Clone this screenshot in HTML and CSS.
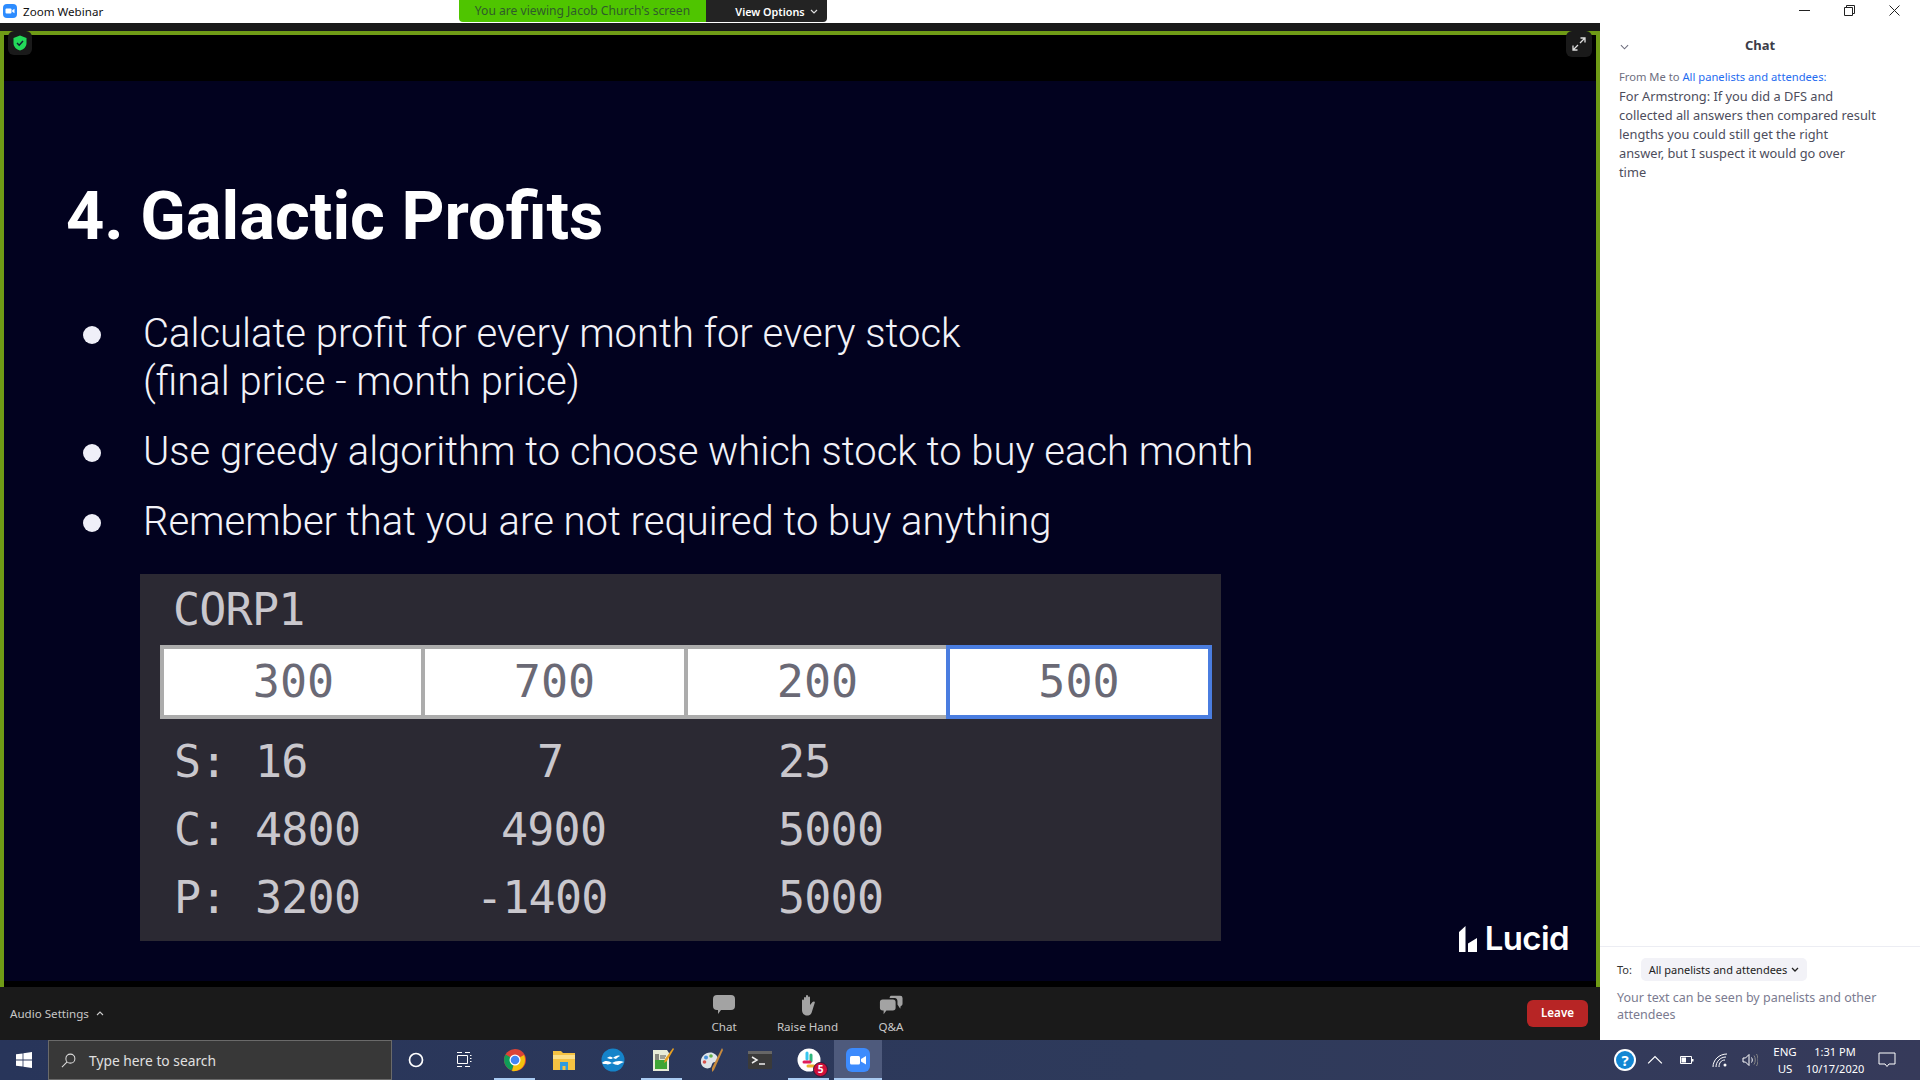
FILE: index.html
```html
<!DOCTYPE html>
<html lang="en">
<head>
<meta charset="utf-8">
<title>Zoom Webinar</title>
<link rel="stylesheet" href="styles.css">
</head>
<body>
<div class="window">
  <header class="titlebar">
    <svg class="app-icon" viewBox="0 0 14 14"><rect width="14" height="14" rx="4" fill="#2d8cff"/><rect x="2.500" y="4.500" width="6" height="5" rx="1" fill="#fff"/><path d="M9.200 6.300 11.500 4.800v4.400L9.200 7.700z" fill="#fff"/></svg>
    <span class="app-name">Zoom Webinar</span>
    <div class="banner">
      <span class="banner-msg">You are viewing Jacob Church's screen</span>
      <span class="banner-opt">View Options <svg class="chev" viewBox="0 0 8 5"><path d="M1 1l3 3 3-3" fill="none" stroke="#ddd" stroke-width="1.200"/></svg></span>
    </div>
    <div class="winctl">
      <svg viewBox="0 0 11 11"><path d="M0 5.500h11" stroke="#222" fill="none"/></svg>
      <svg viewBox="0 0 11 11"><path d="M.5 2.500h8v8h-8zM2.500 2.500v-2h8v8h-2" stroke="#222" fill="none"/></svg>
      <svg viewBox="0 0 11 11"><path d="M.5.500l10 10M10.500.500l-10 10" stroke="#222" fill="none"/></svg>
    </div>
  </header>
  <div class="main">
    <section class="meeting">
      <div class="strip"></div>
      <div class="share">
        <div class="overlay shield">
          <svg viewBox="0 0 14 16"><path d="M7 .5 13.500 3v5c0 4-3 6.500-6.500 7.500C3.500 14.500.5 12 .5 8V3z" fill="#23d959"/><path d="M4 8l2.200 2.200L10 6" fill="none" stroke="#123" stroke-width="1.500"/></svg>
        </div>
        <div class="overlay expand">
          <svg viewBox="0 0 14 14"><path d="M8.500 1H13v4.500M13 1 8 6M5.500 13H1V8.500M1 13l5-5" fill="none" stroke="#ddd" stroke-width="1.300"/></svg>
        </div>
        <div class="blackband-top"></div>
        <div class="slide">
          <h1 class="slide-title">4. Galactic Profits</h1>
          <ul class="points">
            <li class="point first">Calculate profit for every month for every stock<br>(final price - month price)</li>
            <li class="point second">Use greedy algorithm to choose which stock to buy each month</li>
            <li class="point third">Remember that you are not required to buy anything</li>
          </ul>
          <div class="corp">
            <div class="corp-name">CORP1</div>
            <div class="prices">
              <div class="price">300</div>
              <div class="price">700</div>
              <div class="price">200</div>
              <div class="price active">500</div>
            </div>
            <div class="stat s-row"><span class="lab">S:</span><span class="v1">16</span><span class="v2 p57">7</span><span class="v3">25</span></div>
            <div class="stat"><span class="lab">C:</span><span class="v1">4800</span><span class="v2 p21">4900</span><span class="v3">5000</span></div>
            <div class="stat"><span class="lab">P:</span><span class="v1">3200</span><span class="v2 neg">-1400</span><span class="v3">5000</span></div>
          </div>
          <div class="overlay lucid">
            <svg viewBox="0 0 18 26"><path d="M0 6 6.500 0v26H0zM9 26V17.500L18 12v14z" fill="#fff"/></svg>
            <span>Lucid</span>
          </div>
        </div>
        <div class="blackband-bottom"></div>
      </div>
      <footer class="toolbar">
        <div class="audio">Audio Settings <svg class="chev" viewBox="0 0 8 5"><path d="M1 4l3-3 3 3" fill="none" stroke="#ccc" stroke-width="1.100"/></svg></div>
        <div class="tools">
          <div class="tool">
            <svg viewBox="0 0 24 22"><path d="M5 1h14a4 4 0 0 1 4 4v7a4 4 0 0 1-4 4H9l-3 4v-4H5a4 4 0 0 1-4-4V5a4 4 0 0 1 4-4z" fill="#a3a3a3"/></svg>
            <span>Chat</span>
          </div>
          <div class="tool hand">
            <svg viewBox="0 0 20 22"><path d="M4 11V6.500a1 1 0 0 1 2 0V4a1 1 0 0 1 2 0V2a1 1 0 0 1 2 0v1.500a1 1 0 0 1 2 0V11l2.500-3c1-1.200 3-.4 2.200 1L13.500 19c-1 2-2.500 2.500-4.500 2.500C6 21.500 4 19 4 16z" fill="#a3a3a3"/></svg>
            <span>Raise Hand</span>
          </div>
          <div class="tool">
            <svg viewBox="0 0 26 22"><path d="M13 1h10a2.500 2.500 0 0 1 2.500 2.500v6c0 1.500-.8 2.500-2 2.500l-.5 3-3-4.500V7c0-2-1-3.500-3-3.500h-5.500C11.800 2 12 1 13 1z" fill="#a3a3a3"/><path d="M4 5h11a3 3 0 0 1 3 3v6a3 3 0 0 1-3 3H8l-3 4v-4H4a3 3 0 0 1-3-3V8a3 3 0 0 1 3-3z" fill="#a3a3a3"/></svg>
            <span>Q&amp;A</span>
          </div>
        </div>
        <div class="leave">Leave</div>
      </footer>
    </section>
    <aside class="chat">
      <div class="chat-head">
        <svg class="chat-chev" viewBox="0 0 10 6"><path d="M1 1l4 4 4-4" fill="none" stroke="#6e6e7e" stroke-width="1.200"/></svg>
        <span class="chat-title">Chat</span>
      </div>
      <div class="chat-body">
        <div class="from">From Me to <span class="to-link">All panelists and attendees:</span></div>
        <p class="msg">For Armstrong: If you did a DFS and<br>collected all answers then compared result<br>lengths you could still get the right<br>answer, but I suspect it would go over<br>time</p>
      </div>
      <div class="chat-foot">
        <div class="to-row"><span class="to-lab">To:</span><span class="to-pill">All panelists and attendees <svg class="chev" viewBox="0 0 8 5"><path d="M1 1l3 3 3-3" fill="none" stroke="#222" stroke-width="1.300"/></svg></span></div>
        <div class="placeholder">Your text can be seen by panelists and other<br>attendees</div>
      </div>
    </aside>
  </div>
  <footer class="taskbar">
    <svg class="start" viewBox="0 0 16 16"><path d="M0 2.300 6.600 1.400v6.200H0zM7.400 1.300 16 0v7.600H7.400zM0 8.400h6.600v6.200L0 13.700zM7.400 8.400H16V16l-8.600-1.300z" fill="#fff"/></svg>
    <div class="search">
      <svg viewBox="0 0 16 16"><circle cx="10" cy="6" r="4.800" fill="none" stroke="#ddd" stroke-width="1.100"/><path d="M6.500 9.500 1 15" stroke="#ddd" stroke-width="1.100"/></svg>
      <span>Type here to search</span>
    </div>
    <div class="task plain"><svg viewBox="0 0 16 16"><circle cx="8" cy="8" r="6.500" fill="none" stroke="#fff" stroke-width="1.700"/></svg></div>
    <div class="task plain taskview"><svg viewBox="0 0 16 16"><path d="M1 .5h5M9 .5h5M1.500 3.500h10v8h-10zM14 3.500h1.500M14 6.500h1.500M14 9.500h1.500M1 14.500h5M9 14.500h5" fill="none" stroke="#fff"/></svg></div>
    <div class="task on"><svg viewBox="0 0 24 24"><circle cx="12" cy="12" r="11" fill="#db4437"/><path d="M12 12 2.500 6.500A11 11 0 0 0 9 22.500z" fill="#0f9d58"/><path d="M12 12 9 23a11 11 0 0 0 13-11 10 10 0 0 0-1-5z" fill="#f4c20d"/><circle cx="12" cy="12" r="5.500" fill="#fff"/><circle cx="12" cy="12" r="4.300" fill="#4285f4"/></svg></div>
    <div class="task"><svg viewBox="0 0 24 24"><path d="M1 3h8l2 2h12v17H1z" fill="#f5c242"/><rect x="1" y="7" width="22" height="4" fill="#fbe08a"/><path d="M8 22v-8h8v8h-2.500v-4h-3v4z" fill="#2f9be0"/></svg></div>
    <div class="task"><svg viewBox="0 0 24 24"><circle cx="12" cy="12" r="11.500" fill="#1583c9"/><path d="M1 15c3-3 7-2 10 0 3-2 8-3 12-1-3 1-4 2-6 3-2 0-4-1-6-2-2 1-4 2-6 1-2 0-3 0-4-1zM6 10c2-2 4-2 6 0 2-2 5-3 7-2-2 1-3 2-4 3-1 0-2-1-3-1-1 1-2 1-3 1s-2-1-3-1z" fill="#fff"/></svg></div>
    <div class="task on"><svg viewBox="0 0 24 24"><path d="M3 2h14l2 3v18H3z" fill="#e8ecd8"/><path d="M5 12h12v9H5z" fill="#3fa535"/><path d="M6 6v6M8 6v6" stroke="#222" fill="none"/><path d="M10 8h6M10 10h5" stroke="#555" fill="none"/><path d="M23 0l1 1-7 12-3 2 1-4z" fill="#e8a020"/></svg></div>
    <div class="task"><svg viewBox="0 0 24 24"><path d="M2 15C1 8 8 3 14 5c5 2 7 8 2 9-3 0-3 3-4 5-3 3-9 1-10-4z" fill="#dfe4ea"/><circle cx="7" cy="9.500" r="2" fill="#4a90d9"/><circle cx="12" cy="8" r="1.800" fill="#63b04a"/><circle cx="5.500" cy="14" r="1.800" fill="#d9534f"/><path d="M23 0l1 2-9 20-2 2 0-4z" fill="#c98b3d"/></svg></div>
    <div class="task"><svg viewBox="0 0 24 20"><rect width="24" height="18" y="1" rx="1" fill="#3a3a3a"/><rect width="24" height="3" y="1" fill="#666"/><path d="M4 7l5 3-5 3" fill="none" stroke="#eee" stroke-width="1.500"/><path d="M11 14h6" stroke="#eee" stroke-width="1.500"/></svg></div>
    <div class="task on slack"><svg viewBox="0 0 24 24"><circle cx="12" cy="12" r="11.500" fill="#fff"/><path d="M10 5v6" stroke-width="3" stroke-linecap="round" fill="none" stroke="#36c5f0"/><path d="M14 7v6" stroke="#2eb67d" stroke-width="3" stroke-linecap="round"/><path d="M11 18h6" stroke="#ecb22e" stroke-width="3" stroke-linecap="round"/><path d="M7 14h6" stroke="#e01e5a" stroke-width="3" stroke-linecap="round"/></svg><span class="overlay badge">5</span></div>
    <div class="task on zoomapp"><svg viewBox="0 0 24 24"><rect width="24" height="24" rx="6" fill="#3d8bfd"/><rect x="4" y="8" width="10" height="8.500" rx="1.500" fill="#fff"/><path d="M15 11l5-3v8.500l-5-3z" fill="#fff"/></svg></div>
    <div class="tray">
      <svg class="t-help" viewBox="0 0 24 24"><circle cx="12" cy="12" r="11" fill="#fff"/><circle cx="12" cy="12" r="9" fill="#1387d3"/><text x="12" y="17.500" text-anchor="middle" class="qmark">?</text></svg>
      <svg class="t-ico t-caret" viewBox="0 0 14 14"><path d="M1 10l6-6 6 6" fill="none" stroke="#fff" stroke-width="1.100"/></svg>
      <svg class="t-ico t-batt" viewBox="0 0 16 14"><path d="M1.500 3.500h11v7h-11z" fill="none" stroke="#fff"/><rect x="2.500" y="4.500" width="4.500" height="5" fill="#fff"/><rect x="13" y="6" width="1.500" height="2.500" fill="#fff"/></svg>
      <svg class="t-ico t-wifi" viewBox="0 0 16 16"><path d="M1 15C1 8 7 2 15 2M4 15c0-5 4-10 10-10M7 15c0-4 2-7 6-7" fill="none" stroke="#fff" stroke-width="1"/><circle cx="13" cy="13" r="1.500" fill="#fff"/></svg>
      <svg class="t-ico t-vol" viewBox="0 0 16 16"><path d="M1 6h2.500L7 2.500v11L3.500 10H1z" fill="none" stroke="#fff"/><path d="M9.500 5.500c1 1.500 1 3.500 0 5" fill="none" stroke="#fff"/><path d="M12 3.500c1.700 2.500 1.700 6.500 0 9M14.500 2c2 3.500 2 8.500 0 12" fill="none" stroke="#888"/></svg>
      <div class="t-lang"><span>ENG</span><span>US</span></div>
      <div class="t-time"><span>1:31 PM</span><span>10/17/2020</span></div>
      <svg class="t-note" viewBox="0 0 18 16"><path d="M1 1h16v11h-6l-2 2.500L7 12H1z" fill="none" stroke="#fff"/></svg>
    </div>
  </footer>
</div>
</body>
</html>
```

FILE: styles.css
```css
* { box-sizing: border-box; }
html, body { margin: 0; padding: 0; }
body { width: 1920px; height: 1080px; overflow: hidden; font-family: "Noto Sans", "Open Sans", sans-serif; background: #fff; }
svg { display: block; flex: none; }
.overlay { position: absolute; }
.window { width: 1920px; height: 1080px; display: flex; flex-direction: column; }

/* title bar */
.titlebar { height: 23px; background: #fff; display: flex; align-items: flex-start; flex: none; }
.app-icon { width: 14px; height: 14px; margin: 4px 0 0 3px; }
.app-name { font-size: 11.600px; line-height: 23px; margin-left: 6px; color: #111; width: 100px; }
.banner { display: flex; height: 22px; margin-left: 336px; line-height: 21px; border-radius: 0 0 4px 4px; overflow: hidden; }
.banner-msg { width: 247px; background: #4fc500; color: #2f5c2a; text-align: center; font-size: 12.100px; }
.banner-opt { width: 121px; background: #232323; color: #fff; display: flex; align-items: center; justify-content: center; gap: 5px; font-weight: 600; font-size: 10.800px; padding-left: 20px; }
.chev { width: 8px; height: 5px; }
.winctl { margin-left: auto; display: flex; align-items: center; height: 20px; padding-right: 20px; gap: 34px; }
.winctl svg { width: 11px; height: 11px; }

.main { flex: 1; display: flex; min-height: 0; }
.meeting { width: 1600px; display: flex; flex-direction: column; background: #1a1a1a; }
.strip { height: 8px; background: #1a1a1a; }
.share { position: relative; flex: 1; display: flex; flex-direction: column; border: solid #6f9b16; border-width: 4px 4px 0 4px; background: #000; min-height: 0; }
.blackband-top { height: 46px; flex: none; }
.blackband-bottom { height: 6px; flex: none; }
.shield { left: 4px; top: -4px; width: 24px; height: 24px; background: #1a1a1a; border-radius: 6px; display: flex; align-items: center; justify-content: center; }
.shield svg { width: 14px; height: 16px; }
.expand { right: 4px; top: -4px; width: 26px; height: 26px; background: #1a1a1a; border-radius: 6px; display: flex; align-items: center; justify-content: center; }
.expand svg { width: 14px; height: 14px; }

/* slide */
.slide { position: relative; flex: 1; background: #02021f; padding: 95px 0 0 62px; min-height: 0; }
.slide-title { margin: 0; font-family: Roboto, sans-serif; font-weight: 700; font-size: 66.800px; line-height: 80px; color: #fff; }
.points { list-style: none; margin: 54px 0 0 0; padding: 0 0 0 77px; font-family: Roboto, sans-serif; font-weight: 300; font-size: 40px; line-height: 48px; color: #f2f2f8; }
.point { position: relative; }
.point::before { content: ""; position: absolute; left: -60px; top: 16px; width: 18px; height: 18px; border-radius: 50%; background: #efeff8; }
.second { margin-top: 22px; }
.third { margin-top: 22px; }

.corp { width: 1081px; height: 367px; margin: 28px 0 0 74px; background: #2b2933; font-family: "DejaVu Sans Mono", monospace; font-size: 45px; line-height: 52px; color: #c9c7cd; padding: 0 9px 0 20px; display: flex; flex-direction: column; }
.corp-name { height: 71px; padding: 10px 0 0 13px; letter-spacing: -0.800px; }
.prices { display: grid; grid-template-columns: repeat(4, 1fr); height: 74px; }
.price { background: #fff; border: 4px solid #acacac; border-left-width: 2px; border-right-width: 2px; color: #6a6975; text-align: center; line-height: 66px; }
.price:first-child { border-left-width: 4px; padding-left: 2px; }
.price.active { border: 4px solid #4a7de0; margin-left: -3px; }
.stat { display: flex; height: 68px; padding-left: 14px; line-height: 68px; letter-spacing: -0.800px; }
.s-row { margin-top: 9px; }
.lab { width: 81px; }
.v1 { width: 225px; }
.v2 { width: 298px; }
.p57 { padding-left: 57px; }
.p21 { padding-left: 21px; }
.neg { margin-left: -4px; padding-right: 0; width: 302px; }

.lucid { right: 27px; bottom: 29px; display: flex; align-items: flex-end; gap: 8px; color: #fff; font-family: Inter, sans-serif; font-weight: 600; font-size: 33px; line-height: 27px; }
.lucid svg { width: 18px; height: 26px; }
.lucid span { letter-spacing: -0.600px; }

/* toolbar */
.toolbar { height: 53px; flex: none; background: #1a1a1a; position: relative; display: flex; align-items: center; color: #c8c8c8; font-size: 11.600px; }
.audio { margin-left: 10px; display: flex; align-items: center; gap: 7px; width: 690px; }
.tools { display: flex; position: absolute; left: 694px; top: 0; }
.tool { width: 60px; display: flex; flex-direction: column; align-items: center; padding-top: 7px; font-size: 11.600px; line-height: 16px; margin-right: 23.500px; white-space: nowrap; }
.tool svg { width: 24px; height: 22px; margin-bottom: 3px; }
.leave { position: absolute; left: 1527px; top: 13px; width: 61px; height: 27px; background: #b72525; border-radius: 6px; color: #fff; font-weight: 600; text-align: center; line-height: 26px; }

/* chat */
.chat { flex: 1; background: #fff; display: flex; flex-direction: column; }
.chat-head { height: 44px; position: relative; display: flex; align-items: center; justify-content: center; flex: none; }
.chat-chev { position: absolute; left: 20px; top: 21px; width: 9px; height: 6px; }
.chat-title { font-size: 13px; font-weight: 700; color: #3c3c48; }
.chat-body { flex: 1; padding: 0 19px; }
.from { font-size: 11.200px; line-height: 20px; color: #6e6e7e; }
.to-link { color: #1f6cf0; }
.msg { margin: 0; font-size: 12.800px; line-height: 19px; color: #4d4d5c; }
.chat-foot { height: 94px; border-top: 1px solid #ecedf3; padding: 10px 17px 0; }
.to-row { display: flex; align-items: center; height: 24px; font-size: 11px; }
.to-lab { width: 24px; color: #333; }
.to-pill { background: #f2f2f7; border-radius: 5px; height: 23px; width: 166px; display: flex; align-items: center; justify-content: center; gap: 4px; color: #222; }
.placeholder { font-size: 12.500px; line-height: 17px; margin-top: 8px; color: #7b7b90; }

/* taskbar */
.taskbar { height: 40px; flex: none; display: flex; align-items: center; background: linear-gradient(90deg, #28355a, #2e3a5b 60%, #363a5a); color: #fff; position: relative; }
.start { width: 16px; height: 16px; margin-left: 16px; }
.search { width: 344px; height: 40px; margin-left: 16px; background: #383838; border: 1px solid #6a6a6a; display: flex; align-items: center; gap: 13px; padding-left: 12px; color: #e0e0e0; font-size: 13.800px; }
.search svg { width: 15px; height: 15px; }
.task { width: 49px; height: 40px; display: flex; align-items: center; justify-content: center; position: relative; }
.task svg { width: 24px; height: 24px; }
.task.plain { width: 48px; }
.task.plain svg { width: 16px; height: 16px; }
.taskview { margin-right: 2px; }
.task.on::after { content: ""; position: absolute; left: 4px; right: 4px; bottom: 0; height: 2px; background: #a9cbf2; }
.zoomapp { background: #4e5a7c; width: 48px; margin-left: 1px; }
.zoomapp.on::after { left: 0; right: 0; }
.badge { right: 5px; bottom: 3px; width: 15px; height: 15px; border-radius: 50%; background: #d0103a; border: 1.500px solid #2a1a3a; font: 700 10px/12px "Noto Sans", sans-serif; text-align: center; color: #fff; }
.tray { margin-left: auto; display: flex; align-items: center; height: 40px; position: relative; padding-right: 24px; }
.t-help { width: 24px; height: 24px; }
.qmark { font: 700 15px "Noto Sans", sans-serif; fill: #fff; }
.t-ico { width: 16px; height: 16px; }
.t-caret { margin-left: 10px; }
.t-batt { margin-left: 16px; }
.t-wifi { margin-left: 17px; }
.t-vol { margin-left: 14px; }
.t-lang, .t-time { display: flex; flex-direction: column; align-items: center; line-height: 17px; }
.t-lang { width: 30px; margin-left: 12px; font-size: 11.500px; }
.t-time { width: 66px; margin-left: 2px; font-size: 11px; }
.t-note { width: 18px; height: 16px; margin-left: 10px; }
```
